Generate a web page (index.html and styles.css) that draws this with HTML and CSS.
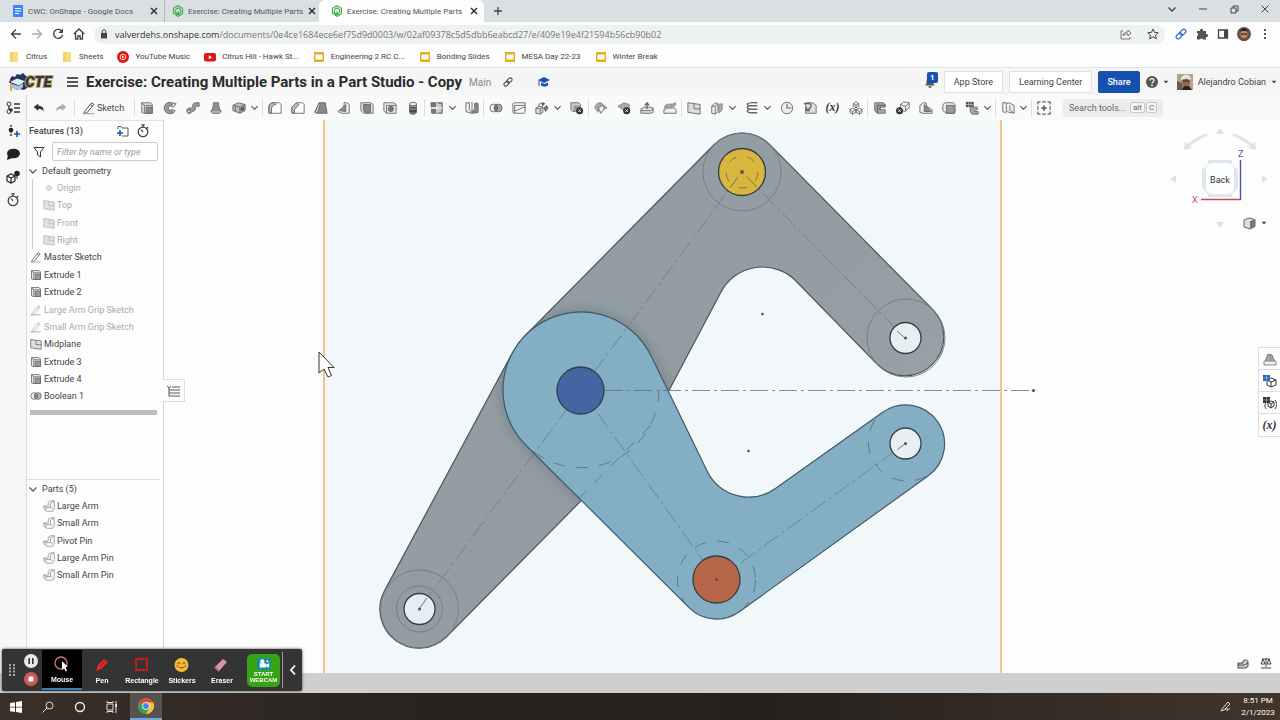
FILE: index.html
```html
<!DOCTYPE html>
<html lang="en">
<head>
<meta charset="utf-8">
<meta name="viewport" content="width=device-width, initial-scale=1">
<title>Exercise: Creating Multiple Parts in a Part Studio - Copy</title>
<link rel="stylesheet" href="styles.css">
</head>
<body>
<svg class="sprite" aria-hidden="true">
  <symbol id="x" viewBox="0 0 10 10"><path d="M2 2l6 6M8 2L2 8" fill="none" stroke="currentColor" stroke-width="1.5"/></symbol>
  <symbol id="chev" viewBox="0 0 10 10"><path d="M1.500 3.500L5 7l3.500-3.500" fill="none" stroke="currentColor" stroke-width="1.4"/></symbol>
  <symbol id="caret" viewBox="0 0 10 10"><path d="M1 3h8L5 7.500z" fill="currentColor"/></symbol>
  <symbol id="onshape" viewBox="0 0 16 16"><path d="M5 2.500L8 1l6 3.500v7L8 15l-3-1.500M11 13.200L2 11.500v-7L5 2.500M5 5.500L8 4l3.500 2v4L8 12l-3.500-2V6M8 8v4" fill="none" stroke="#45ad50" stroke-width="1.500"/></symbol>
  <symbol id="slides" viewBox="0 0 12 12"><path d="M1 1h10v10H1zM2.500 3.500v5h7v-5z" fill="#e4ae22" fill-rule="evenodd"/></symbol>
  <symbol id="folder" viewBox="0 0 12 12"><path d="M2 1h8v10H2z" fill="#f8dc80"/><path d="M2 1h3v10H2z" fill="#f2d06a"/></symbol>
  <symbol id="sketch" viewBox="0 0 16 16"><path d="M3 12L11 2l2.500 2L5.500 13.500 2 14.500zM9.500 4l2.500 2" fill="none" stroke="currentColor" stroke-width="1.100"/><path d="M1 14.500h13" stroke="#8aa0bf" stroke-width="1.200"/></symbol>
  <symbol id="extrude" viewBox="0 0 16 16"><path d="M2 13V2h10l2 2v10H4zM2 2l3 3v9M5 5h9" fill="#e4e4e4" stroke="currentColor"/><path d="M7 7h7v7H7z" fill="#888" stroke="currentColor"/></symbol>
  <symbol id="revolve" viewBox="0 0 16 16"><path d="M12 3A6.500 6.500 0 1 0 13 12l-3-2a2.500 2.500 0 1 1 0-4z" fill="#999" stroke="currentColor"/><path d="M9 6l3-4 3 1-3 4zM10 10l4 1-3 3z" fill="#ddd" stroke="currentColor"/></symbol>
  <symbol id="sweep" viewBox="0 0 16 16"><path d="M1 11c0-3 3-3 5-3 3 0 0-6 5-6h4v4h-3c-2 0 0 6-5 6l-2 2H2z" fill="#999" stroke="currentColor"/><circle cx="3" cy="12" r="1.800" fill="#ddd" stroke="currentColor"/></symbol>
  <symbol id="loft" viewBox="0 0 16 16"><path d="M5 2h6c0 5 1 7 3 10l-2 2H4l-2-2c2-3 3-5 3-10z" fill="#909090" stroke="currentColor"/><path d="M3 12.500h10" stroke="#ddd"/></symbol>
  <symbol id="thicken" viewBox="0 0 16 16"><path d="M1 5l6-3 8 2v7l-6 3-8-3z" fill="#bbb" stroke="currentColor"/><path d="M1 5l8 2 6-3M9 7v7M4 6v6" fill="none" stroke="currentColor"/><path d="M10 8l4-2v4l-4 2z" fill="#555"/></symbol>
  <symbol id="fillet" viewBox="0 0 16 16"><path d="M1 14V7c0-3 2-5 5-5h7l2 2v10H4z" fill="#fff" stroke="currentColor"/><path d="M1 8c0-4 2-6 6-6l2 2C6 4 4 6 4 10v4l-3-1z" fill="#bbb" stroke="currentColor"/></symbol>
  <symbol id="chamfer" viewBox="0 0 16 16"><path d="M1 14V7l5-5h7l2 2v10H4z" fill="#fff" stroke="currentColor"/><path d="M1 7l5-5 3 2-5 6v4l-3-1z" fill="#bbb" stroke="currentColor"/></symbol>
  <symbol id="draft" viewBox="0 0 16 16"><path d="M1 13L6 2h7l2 12H4z" fill="#888" stroke="currentColor"/><path d="M1 13L6 2l1 2-3 10z" fill="#ccc" stroke="currentColor"/></symbol>
  <symbol id="rib" viewBox="0 0 16 16"><path d="M1 12l7-5V2h3l3 2v10H5z" fill="#eee" stroke="currentColor"/><path d="M3 11l7-7v8z" fill="#888" stroke="currentColor"/></symbol>
  <symbol id="shell" viewBox="0 0 16 16"><path d="M1 2h11l3 2v10H4l-3-3z" fill="#e4e4e4" stroke="currentColor"/><path d="M4 4h8v9H6L4 11z" fill="#888" stroke="currentColor"/></symbol>
  <symbol id="hole" viewBox="0 0 16 16"><path d="M1 2h11l3 2v10H4l-3-3zM4 5h11M4 5v9" fill="#e9e9e9" stroke="currentColor"/><circle cx="9" cy="9" r="3" fill="#777" stroke="currentColor"/></symbol>
  <symbol id="thread" viewBox="0 0 16 16"><path d="M4 3v10c1 3 7 3 8 0V3z" fill="#999" stroke="currentColor"/><ellipse cx="8" cy="3.500" rx="4" ry="2" fill="#eee" stroke="currentColor"/><path d="M4 7c2 2 6 2 8 0M4 9v3c2 2 6 2 8 0V9c-2 2-6 2-8 0" fill="#444" stroke="currentColor"/></symbol>
  <symbol id="pattern" viewBox="0 0 16 16"><path d="M1 2h13v12H2z" fill="#777" stroke="currentColor"/><path d="M8 2v12M1 8h13" stroke="#fff" stroke-width="1.500"/><path d="M9 3h4v4H9zM9 9h4v4H9z" fill="#ccc"/></symbol>
  <symbol id="mirror" viewBox="0 0 16 16"><path d="M1 2h4v8l2 2v2L1 12z" fill="#eee" stroke="currentColor"/><path d="M15 3l-3-1-1 1v6l-2 2v3l6-1z" fill="#888" stroke="currentColor"/><path d="M8 1v14" stroke="currentColor"/></symbol>
  <symbol id="boolean" viewBox="0 0 16 16"><circle cx="5.500" cy="8" r="4.500" fill="#eee" stroke="currentColor"/><circle cx="10.500" cy="8" r="4.500" fill="#aaa" stroke="currentColor"/><path d="M8 4.300a4.500 4.500 0 0 1 0 7.400 4.500 4.500 0 0 1 0-7.400" fill="#777" stroke="currentColor"/></symbol>
  <symbol id="split" viewBox="0 0 16 16"><path d="M1 3l2-1h12v11l-1 1H2l-1-1zM3 5h12M3 5v9M3 11c5 0 7-4 12-4" fill="#f4f4f4" stroke="currentColor"/></symbol>
  <symbol id="transform" viewBox="0 0 16 16"><path d="M1 8l3-2 5 1v6l-3 2-5-1zM1 8l5 1v6M6 9l3-2M4 6c0-3 3-4 5-3" fill="#ddd" stroke="currentColor"/><path d="M8 1l4 2-4 3z" fill="#555"/><path d="M10 8l3-3 2 3-3 4z" fill="#777" stroke="currentColor"/></symbol>
  <symbol id="delete" viewBox="0 0 16 16"><path d="M1 2h9l2 2v8H3l-2-2z" fill="#ccc" stroke="currentColor"/><path d="M4 5h8v7H4z" fill="#999"/><circle cx="11" cy="11" r="4" fill="#333"/><path d="M9.500 9.500l3 3M12.500 9.500l-3 3" stroke="#fff"/></symbol>
  <symbol id="modify" viewBox="0 0 16 16"><path d="M1 8c0-5 4-6 7-6l7 6-5 2-3-3-2 6z" fill="#aaa" stroke="#888"/><path d="M5 8l4-3 3 3-4 6z" fill="#eee" stroke="currentColor"/></symbol>
  <symbol id="delface" viewBox="0 0 16 16"><path d="M1 6l7-4 6 2v5l-6 2z" fill="#aaa" stroke="#888"/><circle cx="11" cy="11" r="4" fill="#333"/><path d="M9.500 9.500l3 3M12.500 9.500l-3 3" stroke="#fff"/></symbol>
  <symbol id="moveface" viewBox="0 0 16 16"><path d="M1 9l4-2h6l4 1v5l-3 1H1zM1 11h11l3-2" fill="#ddd" stroke="currentColor"/><path d="M8 9V3M5.500 5L8 2l2.500 3" fill="none" stroke="currentColor" stroke-width="1.500"/></symbol>
  <symbol id="replace" viewBox="0 0 16 16"><path d="M1 10l4-2h8l2 2v4H1z" fill="#eee" stroke="currentColor"/><path d="M2 6c4-5 7 0 12-4v3c-4 4-8 0-12 3z" fill="#aaa" stroke="#777"/></symbol>
  <symbol id="plane" viewBox="0 0 16 16"><path d="M1 2l14 2v11L1 13z" fill="#ddd" stroke="currentColor"/><path d="M8 3v6h7" fill="none" stroke="currentColor"/></symbol>
  <symbol id="surface" viewBox="0 0 16 16"><path d="M2 6l4-4 3 1v9l-3 3-4-1z" fill="#eee" stroke="currentColor"/><path d="M10 4l4-1v7l-4 4z" fill="#aaa" stroke="#888"/><path d="M6 6v9M2 6h4l3-3" fill="none" stroke="currentColor"/></symbol>
  <symbol id="helix" viewBox="0 0 16 16"><path d="M14 2C0 1 0 5.500 8 5.500h6C0 4.500 0 9.500 8 9.500h6C0 8.500 0 13.500 8 13.500h6" fill="none" stroke="currentColor" stroke-width="1.600"/></symbol>
  <symbol id="clock" viewBox="0 0 16 16"><circle cx="8" cy="8" r="6.500" fill="#eee" stroke="currentColor"/><path d="M8 3v5h5" fill="none" stroke="currentColor" stroke-width="1.300"/></symbol>
  <symbol id="derive" viewBox="0 0 16 16"><path d="M3 2h8l4 3v9H3z" fill="#ddd" stroke="currentColor"/><path d="M1 3h6c3 0 3 4 0 6l-3 2M4 7v4h4" fill="none" stroke="currentColor" stroke-width="1.500"/></symbol>
  <symbol id="cubes" viewBox="0 0 16 16"><path d="M5 3l3-2 3 2v3L8 8 5 6zM1 10l3-2 4 2v3l-4 2-3-2zM8 10l4-2 3 2v3l-3 2-4-2zM5 3l3 2 3-2M8 5v3M1 10l3 2 4-2M4 12v3M8 10l4 2 3-2M12 12v3" fill="#eee" stroke="currentColor"/></symbol>
  <symbol id="frame" viewBox="0 0 16 16"><path d="M2 2h10l2 2v3H8v3h6v4H5l-3-3z" fill="#aaa" stroke="currentColor"/><path d="M5 5h9M5 5v9M8 7v3" stroke="currentColor" stroke-width="1.500"/></symbol>
  <symbol id="trim" viewBox="0 0 16 16"><path d="M5 4l4-3 6 1v6l-5 4-5-2zM5 4l6 2 4-4M11 6v6" fill="#eee" stroke="currentColor"/><circle cx="4" cy="11" r="4" fill="#333"/><path d="M2.500 9.500l3 3M5.500 9.500l-3 3" stroke="#fff"/></symbol>
  <symbol id="gusset" viewBox="0 0 16 16"><path d="M1 13V5l4-3h3l1 4 6 4v4H4z" fill="#eee" stroke="currentColor"/><path d="M6 12V4l8 8z" fill="#888" stroke="currentColor"/></symbol>
  <symbol id="endcap" viewBox="0 0 16 16"><path d="M1 4l3-2h9l2 2v9l-1 1H5l-4-3z" fill="#eee" stroke="currentColor"/><path d="M5 5h9v9H5z" fill="#999" stroke="currentColor"/></symbol>
  <symbol id="cutlist" viewBox="0 0 16 16"><path d="M1 1h9v6H1z" fill="#555"/><path d="M1 4h9M4 1v6M7 1v6" stroke="#ddd" stroke-width=".6"/><path d="M6 7h8v3h-3v2h4v3H8l-2-3z" fill="#aaa" stroke="currentColor"/></symbol>
  <symbol id="sheet" viewBox="0 0 16 16"><path d="M2 2h4v10l8 2M2 2v10l4 2M6 3l3-1 6 3v9l-5-4V5" fill="#eee" stroke="currentColor"/></symbol>
  <symbol id="addtool" viewBox="0 0 16 16"><path d="M1 4V1h3M6 1h4M12 1h3v3M15 6v4M15 12v3h-3M10 15H6M4 15H1v-3M1 10V6" fill="none" stroke="currentColor" stroke-width="1.400"/><path d="M8 5v6M5 8h6" stroke="currentColor" stroke-width="2"/></symbol>
  <symbol id="part" viewBox="0 0 16 16"><path d="M1 8h6V3l3-2h5v11l-2 3H5l-4-3zM1 8l3 2h6V4l5-3M4 10v4M10 10l3 2" fill="#fafafa" stroke="#777"/></symbol>
  <symbol id="undo" viewBox="0 0 16 16"><path d="M1 6.500L7 2v3c5 0 8 3 7 8-1-3-3-4-7-4v3z" fill="currentColor"/></symbol>
  <symbol id="stopwatch" viewBox="0 0 16 16"><circle cx="8" cy="9" r="5.500" fill="none" stroke="currentColor" stroke-width="1.500"/><path d="M6 1h4M8 1v3M8 9L6 6.500M12.500 3.500l1.500 1.500" stroke="currentColor" stroke-width="1.500"/></symbol>
  <symbol id="link" viewBox="0 0 16 16"><g transform="rotate(-45 8 8)" fill="none" stroke="currentColor" stroke-width="1.600"><rect x="0" y="5.200" width="9" height="5.600" rx="2.800"/><rect x="7" y="5.200" width="9" height="5.600" rx="2.800"/></g></symbol>
</svg>

<div class="app">
  <nav class="tabs" aria-label="Browser tabs">
    <div class="tab"><svg class="ic12" viewBox="0 0 12 12"><path d="M1 0h10v12H1z" fill="#4285f4"/><path d="M3 3.500h6M3 6h6M3 8.500h4" stroke="#fff"/></svg><span>CWC: OnShape - Google Docs</span><button aria-label="Close tab"><svg class="ic10"><use href="#x"/></svg></button></div>
    <div class="tab joined"><svg class="ic12"><use href="#onshape"/></svg><span>Exercise: Creating Multiple Parts</span><button aria-label="Close tab"><svg class="ic10"><use href="#x"/></svg></button></div>
    <div class="tab active"><svg class="ic12"><use href="#onshape"/></svg><span>Exercise: Creating Multiple Parts</span><button aria-label="Close tab"><svg class="ic10"><use href="#x"/></svg></button></div>
    <button class="newtab" aria-label="New tab"><svg class="ic10" viewBox="0 0 10 10"><path d="M5 1v8M1 5h8" stroke="currentColor" stroke-width="1.300"/></svg></button>
    <div class="winctl">
      <button aria-label="Search tabs"><svg class="ic10"><use href="#chev"/></svg></button>
      <button aria-label="Minimize"><svg class="ic10" viewBox="0 0 10 10"><path d="M1 5h8" stroke="currentColor"/></svg></button>
      <button aria-label="Restore"><svg class="ic10" viewBox="0 0 10 10"><path d="M2 4h5v5H2zM4 4V2h5v5H7" fill="none" stroke="currentColor"/></svg></button>
      <button aria-label="Close"><svg class="ic10" viewBox="0 0 10 10"><path d="M1.500 1.500l7 7M8.500 1.500l-7 7" stroke="currentColor"/></svg></button>
    </div>
  </nav>

  <div class="address">
    <button aria-label="Back"><svg class="ic12" viewBox="0 0 12 12"><path d="M11 6H2M6 1.500L1.500 6 6 10.500" fill="none" stroke="#444" stroke-width="1.300"/></svg></button>
    <button aria-label="Forward"><svg class="ic12" viewBox="0 0 12 12"><path d="M1 6h9M6 1.500L10.500 6 6 10.500" fill="none" stroke="#aaa" stroke-width="1.300"/></svg></button>
    <button aria-label="Reload"><svg class="ic12" viewBox="0 0 12 12"><path d="M10 3.500A4.500 4.500 0 1 0 10.500 7" fill="none" stroke="#444" stroke-width="1.400"/><path d="M11 .5V5H6.500z" fill="#444"/></svg></button>
    <button aria-label="Home"><svg class="ic12" viewBox="0 0 12 12"><path d="M.8 6L6 1l5.200 5M2.500 5v6h2.300V8h2.400v3h2.300V5" fill="none" stroke="#444" stroke-width="1.300"/></svg></button>
    <div class="omnibox">
      <svg class="ic10" viewBox="0 0 10 10"><path d="M2 4h6v5.500H2z" fill="#444"/><path d="M3.300 4V2.500a1.700 1.700 0 0 1 3.400 0V4" fill="none" stroke="#444"/></svg>
      <a class="url" href="#"><b>valverdehs.onshape.com</b>/documents/0e4ce1684ece6ef75d9d0003/w/02af09378c5d5dbb6eabcd27/e/409e19e4f21594b56cb90b02</a>
      <button aria-label="Share page"><svg class="ic12" viewBox="0 0 12 12"><path d="M3 3H1v8h9V9M3 8c0-3 2-4 5-4V2l3 3-3 3V6C6 6 4 6 3 8z" fill="none" stroke="#777"/></svg></button>
      <button aria-label="Bookmark"><svg class="ic12" viewBox="0 0 12 12"><path d="M6 1l1.500 3.400 3.700.3-2.800 2.400.9 3.700L6 8.800l-3.300 2 .9-3.700L.8 4.700l3.700-.3z" fill="none" stroke="#444"/></svg></button>
    </div>
    <button class="blue" aria-label="Copy link"><svg class="ic12"><use href="#link"/></svg></button>
    <button aria-label="Extensions"><svg class="ic12" viewBox="0 0 12 12"><path d="M1 3h3a1.600 1.600 0 1 1 3 0h3v3a1.600 1.600 0 1 1 0 3v2.500H7a1.600 1.600 0 0 0-3 0H1V8a1.600 1.600 0 0 0 0-3z" fill="#555"/></svg></button>
    <button aria-label="Side panel"><svg class="ic12" viewBox="0 0 12 12"><path d="M1.500 2h9v8h-9z" fill="none" stroke="#444" stroke-width="1.300"/><path d="M7 2h4v8H7z" fill="#444"/></svg></button>
    <button aria-label="Profile"><svg class="ic14" viewBox="0 0 14 14"><circle cx="7" cy="7" r="7" fill="#5d554d"/><path d="M3 6a4 4 0 0 1 8 0c0 7-8 7-8 0" fill="#c38a69"/><path d="M3 6c0-6 8-6 8 0L9.500 4h-5z" fill="#221b18"/><path d="M4 6.500h2.500v1.200H4zM7.500 6.500H10v1.200H7.500z" fill="none" stroke="#222" stroke-width=".6"/><path d="M3 12.500c3-2 5-2 8 0-3 2-5 2-8 0" fill="#913d32"/></svg></button>
    <button aria-label="Menu"><svg class="ic12" viewBox="0 0 12 12"><path d="M5 1h2v2H5zM5 5h2v2H5zM5 9h2v2H5z" fill="#555"/></svg></button>
  </div>

  <nav class="bookmarks" aria-label="Bookmarks">
    <a href="#"><svg class="ic12"><use href="#folder"/></svg>Citrus</a>
    <a href="#"><svg class="ic12"><use href="#folder"/></svg>Sheets</a>
    <a href="#"><svg class="ic12" viewBox="0 0 12 12"><circle cx="6" cy="6" r="6" fill="#e11717"/><circle cx="6" cy="6" r="2.800" fill="none" stroke="#fff" stroke-width=".8"/><path d="M5 4.500v3L7.500 6z" fill="#fff"/></svg>YouTube Music</a>
    <a href="#"><svg class="ic12" viewBox="0 0 12 12"><rect y="2" width="12" height="8.500" rx="2" fill="#e11717"/><path d="M4.800 4.300v4L8 6.300z" fill="#fff"/></svg>Citrus Hill - Hawk St...</a>
    <a href="#"><svg class="ic12"><use href="#slides"/></svg>Engineering 2 RC C...</a>
    <a href="#"><svg class="ic12"><use href="#slides"/></svg>Bonding Slides</a>
    <a href="#"><svg class="ic12"><use href="#slides"/></svg>MESA Day 22-23</a>
    <a href="#"><svg class="ic12"><use href="#slides"/></svg>Winter Break</a>
  </nav>

  <header class="dochead">
    <svg class="logo" viewBox="0 0 50 20" role="img" aria-label="CTE"><path d="M2 7l2-3 3 1 2-3 3 1 3-2 3 3 3 1-1 4 3 4-4 3-3 2-4-1-4 1-2-3-4-1z" fill="#23345c"/><path d="M1 10l8-4 9 3-7 5z" fill="#dcebf8" stroke="#24385f"/><path d="M4 12v4c4 3 8 2 11-1v-4l-4 3z" fill="#a8c7df"/><path d="M3 11v8" stroke="#d7a944" stroke-width="2"/><text x="17" y="15" class="logo-text">CTE</text></svg>
    <button class="burger" aria-label="Document menu"><svg class="ic12" viewBox="0 0 12 12"><path d="M1 2h11M1 6h11M1 10h11" stroke="#222" stroke-width="1.700"/></svg></button>
    <h1>Exercise: Creating Multiple Parts in a Part Studio - Copy</h1>
    <span class="branch">Main</span>
    <button aria-label="Copy link"><svg class="ic10"><use href="#link"/></svg></button>
    <button class="learn" aria-label="Education"><svg class="ic12" viewBox="0 0 12 12"><path d="M0 4l6-3 6 3-6 3z" fill="#1b54b0"/><path d="M3 6.500v3c2 1.500 5 1.500 7 0v-3L6.500 8zM.5 4h1v6h-1z" fill="#1b54b0"/></svg></button>
    <div class="account">
      <button class="bell" aria-label="1 notification"><svg class="ic12" viewBox="0 0 14 14"><path d="M1 11c2-1 2-3 2-5a4 4 0 0 1 8 0c0 2 0 4 2 5zM5 12h4a2 2 0 0 1-4 0" fill="#555"/></svg><span class="badge">1</span></button>
      <button class="box">App Store</button>
      <button class="box">Learning Center</button>
      <button class="box share">Share</button>
      <button class="help" aria-label="Help"><svg class="ic12" viewBox="0 0 12 12"><circle cx="6" cy="6" r="6" fill="#555"/><path d="M4 4.500c0-2.500 4-2.500 4 0C8 6 6 6 6 7.500" fill="none" stroke="#fff" stroke-width="1.300"/><circle cx="6" cy="9.300" r=".9" fill="#fff"/></svg><svg class="ic6"><use href="#caret"/></svg></button>
      <button class="user"><svg class="avatar" viewBox="0 0 16 16"><path d="M0 0h16v16H0z" fill="#aaa794"/><path d="M0 7l5 2 1 7H0z" fill="#665c42"/><ellipse cx="9" cy="8" rx="4" ry="6" fill="#9a674c"/><path d="M4 6c0-7 10-7 10 0L9 4.500z" fill="#e9e8de"/><path d="M6 7h6" stroke="#332921"/><path d="M5 16l2-4h5l3 4z" fill="#27251f"/></svg>Alejandro Cobian<svg class="ic6"><use href="#caret"/></svg></button>
    </div>
  </header>

  <div class="toolbar" role="toolbar" aria-label="Part Studio tools">
    <button class="railbtn" aria-label="Feature list"><svg class="ic14" viewBox="0 0 14 14"><circle cx="3" cy="3" r="2" fill="none" stroke="#333"/><path d="M3 5v3M8 3h6M8 7h6M8 11h6M3 9h4M5 7v4" stroke="#333" stroke-width="1.400"/><circle cx="3" cy="10.500" r="2" fill="none" stroke="#333"/></svg></button>
    <button class="step" aria-label="Undo"><svg class="ic12"><use href="#undo"/></svg></button>
    <button class="step redo" aria-label="Redo"><svg class="ic12"><use href="#undo"/></svg></button>
    <div class="group sketch"><button><svg class="ic14"><use href="#sketch"/></svg>Sketch</button></div>
    <div class="group">
      <button aria-label="Extrude"><svg><use href="#extrude"/></svg></button><button aria-label="Revolve"><svg><use href="#revolve"/></svg></button><button aria-label="Sweep"><svg><use href="#sweep"/></svg></button><button aria-label="Loft"><svg><use href="#loft"/></svg></button><button aria-label="Thicken"><svg><use href="#thicken"/></svg></button><button class="more" aria-label="More solids"><svg><use href="#chev"/></svg></button>
    </div>
    <div class="group">
      <button aria-label="Fillet"><svg><use href="#fillet"/></svg></button><button aria-label="Chamfer"><svg><use href="#chamfer"/></svg></button><button aria-label="Draft"><svg><use href="#draft"/></svg></button><button aria-label="Rib"><svg><use href="#rib"/></svg></button><button aria-label="Shell"><svg><use href="#shell"/></svg></button><button aria-label="Hole"><svg><use href="#hole"/></svg></button><button aria-label="Thread"><svg><use href="#thread"/></svg></button>
    </div>
    <div class="group">
      <button aria-label="Pattern"><svg><use href="#pattern"/></svg></button><button class="more" aria-label="More patterns"><svg><use href="#chev"/></svg></button><button aria-label="Mirror"><svg><use href="#mirror"/></svg></button>
    </div>
    <div class="group">
      <button aria-label="Boolean"><svg><use href="#boolean"/></svg></button><button aria-label="Split"><svg><use href="#split"/></svg></button><button aria-label="Transform"><svg><use href="#transform"/></svg></button><button class="more" aria-label="More transforms"><svg><use href="#chev"/></svg></button><button aria-label="Delete part"><svg><use href="#delete"/></svg></button>
    </div>
    <div class="group">
      <button aria-label="Modify fillet"><svg><use href="#modify"/></svg></button><button aria-label="Delete face"><svg><use href="#delface"/></svg></button><button aria-label="Move face"><svg><use href="#moveface"/></svg></button><button aria-label="Replace face"><svg><use href="#replace"/></svg></button>
    </div>
    <div class="group">
      <button aria-label="Plane"><svg><use href="#plane"/></svg></button><button aria-label="Surface"><svg><use href="#surface"/></svg></button><button class="more" aria-label="More surfaces"><svg><use href="#chev"/></svg></button><button aria-label="Helix"><svg><use href="#helix"/></svg></button><button class="more" aria-label="More curves"><svg><use href="#chev"/></svg></button><button aria-label="Mate connector"><svg><use href="#clock"/></svg></button><button aria-label="Derived"><svg><use href="#derive"/></svg></button><button class="variable" aria-label="Variable">(x)</button><button aria-label="Composite part"><svg><use href="#cubes"/></svg></button>
    </div>
    <div class="group">
      <button aria-label="Frame"><svg><use href="#frame"/></svg></button><button aria-label="Frame trim"><svg><use href="#trim"/></svg></button><button aria-label="Gusset"><svg><use href="#gusset"/></svg></button><button aria-label="End cap"><svg><use href="#endcap"/></svg></button><button aria-label="Cut list"><svg><use href="#cutlist"/></svg></button><button class="more" aria-label="More frames"><svg><use href="#chev"/></svg></button>
    </div>
    <div class="group">
      <button aria-label="Sheet metal"><svg><use href="#sheet"/></svg></button><button class="more" aria-label="More sheet metal"><svg><use href="#chev"/></svg></button>
    </div>
    <div class="group"><button aria-label="Add custom features"><svg><use href="#addtool"/></svg></button></div>
    <button class="search">Search tools... <kbd>alt</kbd><kbd>C</kbd></button>
  </div>

  <main class="work">
    <aside class="rail">
      <button aria-label="Insert feature"><svg class="ic14" viewBox="0 0 14 14"><path d="M5 1v12" stroke="#222" stroke-width="1.300" stroke-dasharray="2 1"/><circle cx="5" cy="6" r="2.300" fill="#222"/><path d="M11 7v6M8 10h6" stroke="#1b54b0" stroke-width="1.600"/></svg></button>
      <button aria-label="Comments"><svg class="ic14" viewBox="0 0 14 14"><ellipse cx="7.500" cy="6.500" rx="6.500" ry="4.800" fill="#222"/><path d="M2 8l-1 5 5-2z" fill="#222"/></svg></button>
      <button aria-label="Configurations"><svg class="ic14" viewBox="0 0 14 14"><path d="M1 6l4-2 4 2v5l-4 2-4-2zM1 6l4 2 4-2M5 8v5" fill="none" stroke="#222" stroke-width="1.200"/><circle cx="11" cy="3.500" r="2.800" fill="#222"/><path d="M11 6v3" stroke="#222"/></svg></button>
      <button aria-label="History"><svg class="ic14"><use href="#stopwatch"/></svg></button>
    </aside>

    <section class="panel" aria-label="Features">
      <div class="panelhead"><h2>Features (13)</h2><button aria-label="Add folder"><svg class="ic12" viewBox="0 0 12 12"><path d="M1 4V1.500h3l1 1.500h6v8H5" fill="none" stroke="#555"/><path d="M3 5v6M0 8h6" stroke="#1b54b0" stroke-width="1.600"/></svg></button><button aria-label="Regeneration times"><svg class="ic14"><use href="#stopwatch"/></svg></button></div>
      <div class="filter"><svg class="ic12" viewBox="0 0 12 12"><path d="M1 1.500h10L7.500 6v5L4.500 9V6z" fill="none" stroke="#333"/></svg><input type="text" aria-label="Filter features" placeholder="Filter by name or type"></div>
      <ul class="features">
        <li class="root"><svg class="ic10"><use href="#chev"/></svg>Default geometry</li>
        <li class="child dim"><svg class="ic12" viewBox="0 0 12 12"><circle cx="6" cy="6" r="2.300" fill="none" stroke="currentColor"/><circle cx="6" cy="6" r=".8" fill="currentColor"/></svg>Origin</li>
        <li class="child dim"><svg class="ic12"><use href="#plane"/></svg>Top</li>
        <li class="child dim"><svg class="ic12"><use href="#plane"/></svg>Front</li>
        <li class="child dim"><svg class="ic12"><use href="#plane"/></svg>Right</li>
        <li><svg class="ic12"><use href="#sketch"/></svg>Master Sketch</li>
        <li><svg class="ic12"><use href="#extrude"/></svg>Extrude 1</li>
        <li><svg class="ic12"><use href="#extrude"/></svg>Extrude 2</li>
        <li class="dim"><svg class="ic12"><use href="#sketch"/></svg>Large Arm Grip Sketch</li>
        <li class="dim"><svg class="ic12"><use href="#sketch"/></svg>Small Arm Grip Sketch</li>
        <li><svg class="ic12"><use href="#plane"/></svg>Midplane</li>
        <li><svg class="ic12"><use href="#extrude"/></svg>Extrude 3</li>
        <li><svg class="ic12"><use href="#extrude"/></svg>Extrude 4</li>
        <li><svg class="ic12"><use href="#boolean"/></svg>Boolean 1</li>
      </ul>
      <div class="rollback"></div>
      <ul class="parts">
        <li class="root"><svg class="ic10"><use href="#chev"/></svg>Parts (5)</li>
        <li class="item"><svg class="ic12"><use href="#part"/></svg>Large Arm</li>
        <li class="item"><svg class="ic12"><use href="#part"/></svg>Small Arm</li>
        <li class="item"><svg class="ic12"><use href="#part"/></svg>Pivot Pin</li>
        <li class="item"><svg class="ic12"><use href="#part"/></svg>Large Arm Pin</li>
        <li class="item"><svg class="ic12"><use href="#part"/></svg>Small Arm Pin</li>
      </ul>
      <button class="toggle" aria-label="Toggle feature list"><svg class="ic14" viewBox="0 0 14 14"><path d="M5 3h8M5 6h8M5 9h8M5 12h8M2 3v9h3M2 6h3M2 9h3M0 2l2 2 2-2" fill="none" stroke="#555"/></svg></button>
    </section>

    <section class="viewport" aria-label="Graphics area">
      <svg class="model" viewBox="164 120 1116 553" role="img" aria-label="Gripper assembly with two arms and three pins">
        <defs>
          <linearGradient id="steel" x1="0" y1="0" x2="1" y2="1"><stop offset="0" stop-color="#929fa5"/><stop offset=".5" stop-color="#929da3"/><stop offset="1" stop-color="#9ea4aa"/></linearGradient>
          <filter id="soft" x="-20%" y="-20%" width="140%" height="140%"><feGaussianBlur stdDeviation="5"/></filter>
          <clipPath id="large"><path id="largeShape" d="M525.600 335.100L714.300 144.500A39 39 0 0 1 769.800 144.700L933.800 310.700A39 39 0 0 1 878.200 365.300L796 281A47 47 0 0 0 721 292L649.800 426.800 636.400 444.900 446.700 636.500A39 39 0 0 1 384.600 590.600L512.200 353.200A78 78 0 0 1 525.600 335.100Z"/></clipPath>
        </defs>
        <path d="M324 100h677v600H324z" fill="#f2f8f9" stroke="#f3c58c" stroke-width="2"/>
        <use href="#largeShape" fill="url(#steel)" stroke="#4d5358" stroke-width="1.200"/>
        <g clip-path="url(#large)"><path d="M525.900 445.200A78 78 0 1 1 651.200 356L707 471 689 607.600Z" fill="none" stroke="#59666e" stroke-width="6" opacity=".5" filter="url(#soft)"/></g>
        <path d="M525.900 445.200A78 78 0 1 1 651.200 356L707.100 471.100A46 46 0 0 0 775.400 488.400L882.700 412.300A39 39 0 0 1 928.300 475.700L739.300 611.700A39 39 0 0 1 689 607.600Z" fill="#83aec4" stroke="#3f5968" stroke-width="1.200"/>
        <g fill="none" stroke="#6f7d85" stroke-width=".9">
          <circle cx="742" cy="172" r="39"/>
          <circle cx="906" cy="338" r="39"/>
          <circle cx="419.500" cy="609" r="39"/>
          <circle cx="419.500" cy="609" r="23"/>
        </g>
        <g fill="none" stroke="#58758a" stroke-width=".9" stroke-dasharray="12 11">
          <path d="M659 390A78 78 0 0 1 526 445M651 425L570 508"/>
          <circle cx="716.500" cy="580" r="39"/>
          <path d="M875 420A39 39 0 0 0 928 475"/>
        </g>
        <g fill="none" stroke="#667079" stroke-width=".8" stroke-dasharray="18 4 3 4">
          <path d="M742 172L581 390 419 609M742 172L905 338M581 390L717 580M717 580L905 444" opacity=".85"/>
          <path d="M605 390.500H1033"/>
        </g>
        <g stroke="#363c43" stroke-width="1.300">
          <circle cx="742" cy="172" r="23.500" fill="#d9b640"/>
          <circle cx="580.500" cy="390.500" r="23.500" fill="#4565a2"/>
          <circle cx="716.500" cy="579.500" r="23.500" fill="#b76649"/>
          <circle cx="905.500" cy="338" r="15.500" fill="#e8eff4"/>
          <circle cx="905.500" cy="443.500" r="15.500" fill="#e8eff4"/>
          <circle cx="419.500" cy="609" r="15.500" fill="#e5edf5"/>
        </g>
        <g fill="none" stroke="#8a7a3a">
          <circle cx="742" cy="172" r="16" stroke-dasharray="9 11.100" stroke-dashoffset="-20"/>
          <path d="M738 177l-8 11M747 177l10 10M905 338l-8-7M905.500 443.500l-8 6M419 609l8-11" stroke="#77755f"/>
        </g>
        <g fill="#4e5355"><circle cx="742" cy="172" r="1.900"/><circle cx="905.500" cy="338" r="1.500"/><circle cx="905.500" cy="443.500" r="1.500"/><circle cx="419.500" cy="609" r="1.500"/><circle cx="716.500" cy="579.500" r="1.500"/><circle cx="762.500" cy="314" r="1.300"/><circle cx="748.500" cy="451" r="1.300"/><circle cx="1033.500" cy="390.500" r="1.600"/></g>
        <path d="M319 352v21l5-4 4 8 3.500-1.500-3.500-8h6z" fill="#fff" stroke="#333"/>
      </svg>

      <svg class="viewcube" viewBox="0 0 110 110" role="img" aria-label="View cube, back view">
        <g fill="#dde2e3"><path d="M55 8l4 6h-8zM55 108l4-6h-8zM5 59l6-4v8zM103 59l-6-4v8z"/><path d="M19 30l1-8 7 6zM91 30l-1-8-7 6z"/></g>
        <path d="M23 26Q31 18 42 15M87 26Q79 18 68 15" fill="none" stroke="#dde7e8" stroke-width="3"/>
        <path d="M43 40h24v4l6 6v18l-6 6v3H43v-3l-6-6V50l6-6z" fill="#e0e7ea"/><rect x="41" y="43" width="28" height="31" rx="6" fill="#fcfeff"/>
        <path d="M36 79.500h40" stroke="#c9485a" stroke-width="1.400"/><path d="M75.500 80V40" stroke="#5250a6" stroke-width="1.400"/>
        <text x="55" y="63" text-anchor="middle" class="cube-face">Back</text><text x="73" y="37" class="axis-z">Z</text><text x="27" y="83" class="axis-x">X</text>
      </svg>
      <button class="shade" aria-label="View options"><svg class="ic14" viewBox="0 0 14 14"><path d="M1 4l5-2 6 1.500v7L7 13l-6-2z" fill="#ddd" stroke="#666"/><path d="M7 5l5-1.500v7L7 13z" fill="#777"/></svg><svg class="ic6"><use href="#caret"/></svg></button>
      <div class="sidetabs">
        <button aria-label="Appearances"><svg class="ic14" viewBox="0 0 14 14"><path d="M2 10l3-8 4 1 3 7z" fill="#aaa" stroke="#777"/><path d="M1 9h12v4H1zM7 3l1 6" fill="#eee" stroke="#888"/></svg></button>
        <button aria-label="Configuration table"><svg class="ic14" viewBox="0 0 14 14"><path d="M4 6l4-2 5 2v5l-5 2-4-2zM4 6l4 2 5-2M8 8v5" fill="#fff" stroke="#333"/><path d="M0 1h7v6H0z" fill="#2c64b5"/><path d="M0 4h7M3.500 1v6" stroke="#a9c3ea" stroke-width=".6"/></svg></button>
        <button aria-label="Part configuration"><svg class="ic14" viewBox="0 0 14 14"><path d="M5 6l3-1 3 1v4l-3 2-3-2zM5 6l3 2 3-2M8 8v4M3 7c-2 2-1 4 0 6M12 4c2 3 2 6 0 9" fill="none" stroke="#333"/><path d="M0 1h7v6H0z" fill="#333"/><path d="M0 4h7M3.500 1v6" stroke="#bbb" stroke-width=".6"/></svg></button>
        <button class="variable" aria-label="Variable table">(x)</button>
      </div>
      <div class="measure">
        <button aria-label="Measure"><svg class="ic12" viewBox="0 0 12 12"><path d="M1 6h5V4c2-2 5-1 5 1v4c-1 2-3 2-4 2H1zM1 8h6l4-2" fill="#ccc" stroke="#444"/></svg></button>
        <button aria-label="Mass properties"><svg class="ic12" viewBox="0 0 12 12"><path d="M2 2h8M6 1v9M1 11h10M3 2L1 7h4zM9 2L7 7h4z" fill="none" stroke="#444"/></svg></button>
      </div>
    </section>
  </main>

  <div class="band"></div>

  <footer class="taskbar">
    <button aria-label="Start"><svg class="ic12" viewBox="0 0 12 12"><path d="M0 2l5-.8v4.500H0zM6 1l6-1v5.700H6zM0 6.500h5V11l-5-.8zM6 6.500h6V12l-6-.9z" fill="#fff"/></svg></button>
    <button aria-label="Search"><svg class="ic12" viewBox="0 0 12 12"><circle cx="7.500" cy="4.500" r="3.500" fill="none" stroke="#ddd"/><path d="M5 7l-4.500 4.500" stroke="#ddd"/></svg></button>
    <button aria-label="Cortana"><svg class="ic12" viewBox="0 0 12 12"><circle cx="6" cy="6" r="4.500" fill="none" stroke="#eee" stroke-width="1.400"/></svg></button>
    <button aria-label="Task view"><svg class="ic12" viewBox="0 0 12 12"><path d="M1 3h6v6H1zM1 0v1.500h6V0M1 12v-1.500h6V12M10 0v12" fill="none" stroke="#ddd"/><path d="M9 3h2v3H9z" fill="#ddd"/></svg></button>
    <button class="running" aria-label="Chrome"><svg class="chrome" viewBox="0 0 16 16"><circle cx="8" cy="8" r="8" fill="#e04a3b"/><path d="M8 8L1.100 4A8 8 0 0 0 8 16l3.500-6z" fill="#35a355"/><path d="M8 8h0V4.500h7.200A8 8 0 0 1 8 16l3.500-6z" fill="#f7c531"/><circle cx="8" cy="8" r="3.700" fill="#fff"/><circle cx="8" cy="8" r="2.900" fill="#4483e8"/></svg></button>
    <svg class="pen" viewBox="0 0 12 12" role="img" aria-label="Pen workspace"><path d="M2 8L8 1l2 2-6 6-3 1zM5 9c2-3 3-1 2 0s1 1 3-2" fill="none" stroke="#ddd"/></svg>
    <time datetime="2023-02-01T20:51">8:51 PM<br>2/1/2023</time>
  </footer>
</div>

<div class="recorder" role="toolbar" aria-label="Screen recorder">
  <svg class="grip" viewBox="0 0 6 12"><path d="M0 0h2v2H0zM4 0h2v2H4zM0 3.300h2v2H0zM4 3.300h2v2H4zM0 6.600h2v2H0zM4 6.600h2v2H4zM0 10h2v2H0zM4 10h2v2H4z" fill="#aaa"/></svg>
  <div class="transport">
    <button aria-label="Pause"><svg class="ic14" viewBox="0 0 14 14"><circle cx="7" cy="7" r="7" fill="#e8e8e8"/><path d="M5.200 4v6M8.800 4v6" stroke="#333" stroke-width="1.600"/></svg></button>
    <button aria-label="Stop"><svg class="ic14" viewBox="0 0 14 14"><circle cx="7" cy="7" r="7" fill="#cf575a"/><rect x="4.500" y="4.500" width="5" height="5" rx="1" fill="#fff"/></svg></button>
  </div>
  <button class="rtool on"><svg viewBox="0 0 16 16"><circle cx="7" cy="7" r="6" fill="none" stroke="#d7737c" stroke-width="1.300"/><path d="M8 5v9l2-2 1.500 3.500 1.500-.7L11.500 11H14z" fill="#fff"/></svg>Mouse</button>
  <button class="rtool"><svg viewBox="0 0 16 16"><path d="M2 14l2-6 6-6 4 3-7 7z" fill="#ec2525"/><path d="M6 9l5-5" stroke="#8d1616"/></svg>Pen</button>
  <button class="rtool"><svg viewBox="0 0 16 16"><path d="M2 2h11v11H2z" fill="none" stroke="#c91d1d" stroke-width="1.800"/></svg>Rectangle</button>
  <button class="rtool"><svg viewBox="0 0 16 16"><circle cx="7.500" cy="8" r="7" fill="#f5bd38"/><path d="M3.500 6.500q1.500-2 3 0M8.500 6.500q1.500-2 3 0M4 9q3.500 4 7 0" fill="none" stroke="#6f441c"/><circle cx="3.500" cy="9" r="1.500" fill="#ef7f52"/><circle cx="11.500" cy="9" r="1.500" fill="#ef7f52"/></svg>Stickers</button>
  <button class="rtool"><svg viewBox="0 0 16 16"><path d="M1 10l8-8 4 3-8 9z" fill="#dc93a9"/><path d="M1 10l4 4" stroke="#b8708a" stroke-width="2"/></svg>Eraser</button>
  <button class="webcam"><svg viewBox="0 0 16 14"><rect width="16" height="14" rx="2" fill="#188ea7"/><circle cx="6" cy="4" r="2.500" fill="#fff"/><path d="M3 6h7v5H3zM10 8l4-2v5l-4-1zM11 3h2v2h-2z" fill="#fff"/></svg>START<br>WEBCAM</button>
  <button class="collapse" aria-label="Collapse"><svg class="ic12" viewBox="0 0 12 12"><path d="M8 1.500L4 6l4 4.500" fill="none" stroke="#fff" stroke-width="1.800"/></svg></button>
</div>
</body>
</html>
```
FILE: styles.css
```css
* { box-sizing: border-box; }
body { margin: 0; font-family: Roboto, "Liberation Sans", sans-serif; font-size: 9px; color: #444; background: #fdfdfd; }
button { font: inherit; color: inherit; background: none; border: 0; padding: 0; margin: 0; display: flex; align-items: center; justify-content: center; flex: none; white-space: nowrap; }
a { color: inherit; text-decoration: none; }
h1, h2, ul { margin: 0; padding: 0; list-style: none; }
svg { flex: none; }
.sprite { position: absolute; width: 0; height: 0; }
.ic6 { width: 6px; height: 6px; }
.ic10 { width: 10px; height: 10px; }
.ic12 { width: 12px; height: 12px; }
.ic14 { width: 14px; height: 14px; }
.app { display: flex; flex-direction: column; min-height: 100vh; }

.tabs { display: flex; height: 22px; background: #dadfe1; font-size: 8px; }
.tab { display: flex; align-items: center; gap: 4px; width: 159px; padding: 0 5px 0 12px; color: #555; }
.tab:first-child { width: 165px; border-right: 1px solid #b5babc; background-clip: content-box; }
.tab span { flex: 1; white-space: nowrap; }
.tab.joined { padding-left: 7px; width: 154px; }
.tab.active { background: #fdfdfd; border-radius: 6px 6px 0 0; width: 165px; }
.tab button { color: #333; }
.newtab { width: 28px; }
.winctl { display: flex; margin-left: auto; padding-bottom: 4px; }
.winctl button { width: 31px; }

.address { display: flex; align-items: center; height: 24px; padding: 0 5px; font-family: "Open Sans", "Noto Sans", sans-serif; }
.address button { width: 21px; }
.omnibox { flex: 1; display: flex; align-items: center; gap: 6px; height: 19px; margin: 0 5px; padding: 0 2px 0 5px; border-radius: 10px; background: #eef1f1; min-width: 0; }
.url { flex: 1; min-width: 0; overflow: hidden; white-space: nowrap; font-size: 9px; color: #777; }
.url b { font-weight: 400; color: #333; }
.omnibox button { width: 21px; }
.blue { color: #2a71d4; }

.bookmarks { display: flex; align-items: center; gap: 14px; height: 22px; padding: 0 8px; border-bottom: 1px solid #e4e6e6; font-size: 8px; color: #444; }
.bookmarks a { display: flex; align-items: center; gap: 6px; white-space: nowrap; }

.dochead { display: flex; align-items: center; height: 27px; background: #f5f5f5; padding: 0 3px 0 8px; }
.logo { width: 50px; height: 20px; }
.logo-text { font: italic 900 15px Roboto, sans-serif; fill: #26365d; stroke: #cca34b; stroke-width: 2px; paint-order: stroke; }
.burger { width: 28px; }
h1 { font-size: 15px; font-weight: 700; color: #2b2b2b; white-space: nowrap; }
.branch { font-size: 10px; color: #888; margin: 2px 12px 0 7px; }
.learn { margin-left: 25px; }
.account { display: flex; align-items: center; margin-left: auto; gap: 6px; }
.bell { position: relative; width: 16px; height: 22px; }
.badge { position: absolute; top: 1px; left: 5px; width: 11px; height: 11px; border-radius: 2px; background: #1651b0; color: #fff; font-size: 8px; font-weight: 700; line-height: 11px; }
.box { height: 22px; padding: 0 9px; background: #fff; border: 1px solid #e1e1e1; border-radius: 2px; }
.box.share { padding: 0 8px; background: #1651b0; border-color: #1651b0; color: #fff; font-weight: 500; }
.help, .user { gap: 5px; }
.user { margin-left: 2px; }
.avatar { width: 16px; height: 16px; }

.toolbar { display: flex; align-items: center; height: 25px; background: #fafafa; color: #666; }
.railbtn { width: 27px; height: 25px; background: #f5f5f5; border-right: 1px solid #ddd; }
.step { width: 23px; color: #333; }
.redo { color: #aaa; transform: scaleX(-1); }
.group { display: flex; height: 17px; border-left: 1px solid #ddd; }
.group button { width: 23px; }
.group svg { width: 14px; height: 14px; }
.group .more { width: 12px; justify-content: flex-start; }
.group .more svg { width: 9px; height: 9px; }
.group.sketch { width: 60px; margin-left: 1px; color: #444; }
.group.sketch button { width: auto; gap: 1px; padding-left: 7px; }
.variable { font: italic 700 12px "Liberation Serif", serif; color: #333; }
.search { height: 18px; padding: 0 6px; margin-left: 8px; background: #ececec; border-radius: 2px; }
kbd { border: 1px solid #c7c7c7; background: #f5f5f5; border-radius: 2px; padding: 0 2px; margin-left: 1px; font: 8px Roboto, sans-serif; }
.search kbd:first-child { margin-left: 4px; }

.work { flex: 1; display: flex; min-height: 0; }
.rail { display: flex; flex-direction: column; gap: 9px; width: 27px; padding-top: 4px; background: #f7f7f7; border-right: 1px solid #ddd; align-items: center; }
.panel { position: relative; display: flex; flex-direction: column; width: 137px; border-top: 1px solid #e3e3e3; border-right: 1px solid #d5d5d5; }
.panelhead { display: flex; align-items: center; height: 20px; padding: 0 13px 0 2px; gap: 7px; }
h2 { flex: 1; font-size: 9px; font-weight: 500; }
.filter { display: flex; align-items: center; gap: 7px; height: 21px; padding: 0 5px 0 6px; }
.filter input { flex: 1; min-width: 0; height: 19px; padding: 0 4px; border: 1px solid #ccc; border-radius: 2px; font: italic 9px Roboto, sans-serif; background: #fff; }
.filter input::placeholder { color: #999; }
.features, .parts { display: flex; flex-direction: column; }
.features { height: 243px; }
.parts { height: 105px; margin-top: 64px; border-top: 1px solid #ddd; margin-right: 3px; }
li { flex: 1; display: flex; align-items: center; gap: 2px; padding-left: 3px; white-space: nowrap; }
li svg { opacity: .85; }
li.root { padding-left: 1px; gap: 4px; }
li.child { margin-left: 5px; padding-left: 10px; border-left: 1px solid #ccc; }
li.item { padding-left: 16px; }
.dim { color: #aaa; }
.rollback { height: 5px; margin: 5px 6px 0 3px; background: #bdbdbd; }
.toggle { position: absolute; left: 100%; top: 258px; width: 22px; height: 23px; border: 1px solid #ddd; border-left: 0; background: #fdfdfd; }

.viewport { position: relative; flex: 1; min-width: 0; display: flex; }
.model { flex: 1; width: 100%; min-width: 0; height: auto; }
.viewcube { position: absolute; right: 5px; top: 0; width: 110px; height: 110px; }
.cube-face { font: 9px Roboto, sans-serif; fill: #333; }
.axis-x { font: 9px Roboto, sans-serif; fill: #c9485a; }
.axis-z { font: 9px Roboto, sans-serif; fill: #5250a6; }
.shade { position: absolute; right: 13px; top: 96px; gap: 4px; }
.sidetabs { position: absolute; right: 0; top: 227px; width: 22px; border: 1px solid #ddd; border-right: 0; background: #fff; }
.sidetabs button { width: 100%; height: 22px; border-bottom: 1px solid #ddd; }
.sidetabs button:last-child { border-bottom: 0; }
.measure { position: absolute; right: 8px; bottom: 4px; display: flex; gap: 11px; }

.band { height: 20px; background: #cfcfcf; }
.taskbar { display: flex; align-items: center; height: 27px; background: linear-gradient(90deg, #3a3029, #292421 30%, #26211e 60%, #41352b); color: #fff; font-family: "Open Sans", "Noto Sans", sans-serif; font-size: 8px; }
.taskbar button { width: 32px; height: 27px; }
.taskbar .running { margin-left: 2px; background: #555250; border-bottom: 2px solid #70a8dc; }
.chrome { width: 16px; height: 16px; }
.pen { width: 12px; height: 12px; margin-left: auto; margin-right: 4px; }
.taskbar time { width: 44px; text-align: center; line-height: 12px; font-family: Roboto, sans-serif; }

.recorder { position: fixed; left: 2px; bottom: 29px; display: flex; align-items: center; width: 300px; height: 42px; background: #343434; border-radius: 2px; color: #fff; box-shadow: 0 0 3px #444; font: 700 7px "Liberation Sans", sans-serif; }
.grip { width: 6px; height: 12px; margin: 0 6px 0 7px; }
.transport { display: flex; flex-direction: column; gap: 4px; width: 19px; margin-right: 2px; }
.rtool { flex-direction: column; gap: 4px; width: 40px; height: 40px; }
.rtool svg { width: 16px; height: 16px; }
.rtool.on { background: #000; border-bottom: 2px solid #3481ba; }
.webcam { flex-direction: column; gap: 1px; width: 33px; height: 33px; margin-left: 5px; border-radius: 5px; background: #36a312; font-size: 6px; line-height: 6px; }
.webcam svg { width: 14px; height: 12px; }
.collapse { width: 20px; height: 36px; margin-left: 2px; border-left: 1px solid #999; }
```
